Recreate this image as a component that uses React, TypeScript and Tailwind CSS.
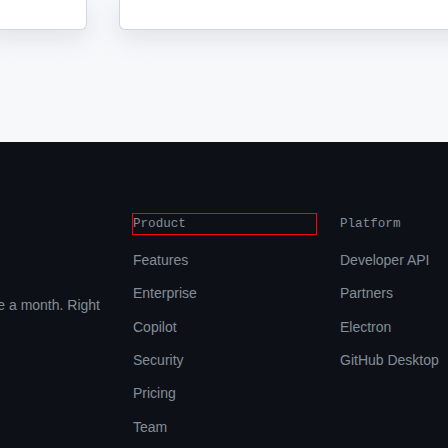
export default function App() {
  const product = ["Features", "Enterprise", "Copilot", "Security", "Pricing", "Team"];
  const platform = ["Developer API", "Partners", "Electron", "GitHub Desktop"];

  return (
    <div className="h-[448px] w-[448px] overflow-hidden bg-[#f6f8fa] font-['Liberation_Sans',Arial,sans-serif]">
      <div className="flex h-[142px] gap-[32px]">
        <div className="-ml-4 h-[30px] w-[103px] shrink-0 rounded-b-md border-b border-r border-[#d0d7de] bg-white shadow-[0_8px_24px_rgba(140,149,159,0.2)]" />
        <div className="-mr-10 h-[30px] flex-1 rounded-b-md border-b border-l border-[#d0d7de] bg-white shadow-[0_8px_24px_rgba(140,149,159,0.2)]" />
      </div>
      <div className="flex h-[306px] bg-[#0d1117] pt-[71px] text-[14px] text-[#848d97]">
        <div className="w-[132px] shrink-0">
          <div className="mt-[81.5px] flex w-[100px] justify-end overflow-hidden whitespace-nowrap leading-[21px]">
            <span>Subscribe for tips and news, twice a month. Right</span>
          </div>
        </div>
        <FooterColumn title="Product" items={product} outlined />
        <div className="w-[22px] shrink-0" />
        <FooterColumn title="Platform" items={platform} />
      </div>
    </div>
  );
}

function FooterColumn({ title, items, outlined = false }: { title: string; items: string[]; outlined?: boolean }) {
  return (
    <div className="w-[185px] shrink-0">
      <h2
        className={`flex h-[22px] items-center border font-['Liberation_Mono',monospace] text-[12.6px] text-[#848d97] ${
          outlined ? "border-[#ff0000]" : "border-transparent"
        }`}
      >
        {title}
      </h2>
      <ul className="mt-[8.6px]">
        {items.map((item) => (
          <li key={item} className="flex h-[33.4px] items-center whitespace-nowrap pl-[1px]">
            {item}
          </li>
        ))}
      </ul>
    </div>
  );
}
